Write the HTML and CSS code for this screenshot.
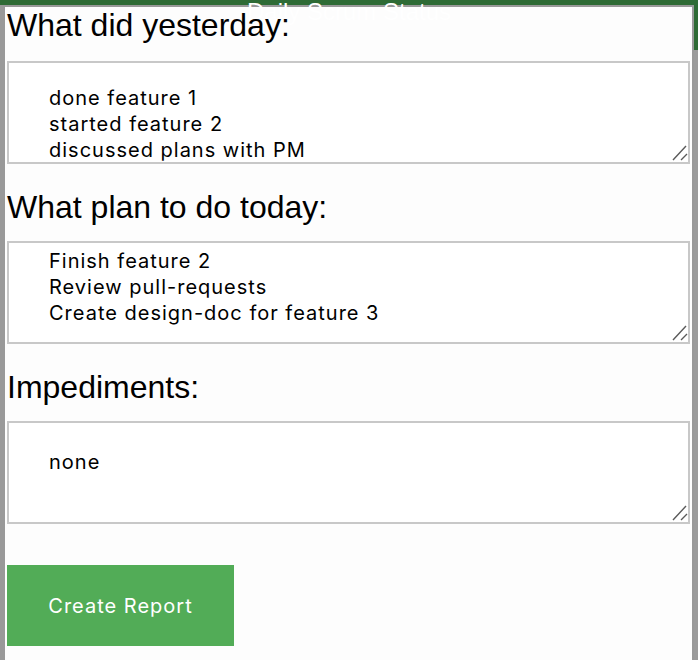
FILE: index.html
```html
<!DOCTYPE html>
<html>
<head>
<meta charset="utf-8">
<link rel="stylesheet" href="styles.css">
</head>
<body>
<header class="topbar">Daily Scrum Status</header>
<main class="panel">
  <h2 class="label">What did yesterday:</h2>
  <div class="field-wrap">
    <textarea class="field field-a">done feature 1
started feature 2
discussed plans with PM</textarea>
    <svg class="grip" width="20" height="20" viewBox="0 0 20 20"><path d="M3 16 L16 2 M11 16 L17 10" stroke="#5a5a5a" stroke-width="1.4" fill="none"/></svg>
  </div>
  <h2 class="label">What plan to do today:</h2>
  <div class="field-wrap">
    <textarea class="field field-b">Finish feature 2
Review pull-requests
Create design-doc for feature 3</textarea>
    <svg class="grip" width="20" height="20" viewBox="0 0 20 20"><path d="M3 16 L16 2 M11 16 L17 10" stroke="#5a5a5a" stroke-width="1.4" fill="none"/></svg>
  </div>
  <h2 class="label">Impediments:</h2>
  <div class="field-wrap">
    <textarea class="field field-c">none</textarea>
    <svg class="grip" width="20" height="20" viewBox="0 0 20 20"><path d="M3 16 L16 2 M11 16 L17 10" stroke="#5a5a5a" stroke-width="1.4" fill="none"/></svg>
  </div>
  <button class="submit">Create Report</button>
</main>
</body>
</html>
```
FILE: styles.css
```css
html, body {
  margin: 0;
  padding: 0;
}
body {
  background: #9b9b9b;
  height: 660px;
  overflow: hidden;
  font-family: "Liberation Sans", Arial, sans-serif;
}
.topbar {
  display: block;
  height: 50px;
  background: #2e6b35;
  color: #ffffff;
  text-align: center;
  font-size: 24px;
  line-height: 24px;
}
.panel {
  display: flex;
  flex-direction: column;
  align-items: stretch;
  margin: -45px 4px 0 0;
  border-style: solid;
  border-color: #999999;
  border-width: 2px 2px 0 5px;
  background: #fdfdfd;
  padding: 0 2px 40px 2px;
  min-height: 700px;
}
.label {
  margin: 25px 0 15px 0;
  font-size: 32px;
  font-weight: normal;
  line-height: 37px;
  color: #000;
}
.label:first-child {
  margin-top: 0;
  margin-bottom: 17px;
}
.field-wrap {
  position: relative;
  display: flex;
}
.field {
  flex: 1;
  box-sizing: border-box;
  height: 103px;
  margin: 0;
  border: 2px solid #c8c8c8;
  background: #ffffff;
  font-family: Inter, "Liberation Sans", sans-serif;
  font-size: 20px;
  letter-spacing: 1px;
  line-height: 26px;
  color: #000;
  padding: 0 10px 0 40px;
  overflow: hidden;
  resize: none;
}
.field-a { padding-top: 22px; }
.field-b { padding-top: 5px; }
.field-c { padding-top: 26px; }
.grip {
  position: absolute;
  right: 0;
  bottom: 0;
}
.submit {
  align-self: flex-start;
  margin-top: 41px;
  width: 227px;
  height: 81px;
  border: none;
  background: #52ac57;
  color: #ffffff;
  font-family: Inter, "Liberation Sans", sans-serif;
  font-size: 20px;
  letter-spacing: 1px;
  padding: 0;
}
```
